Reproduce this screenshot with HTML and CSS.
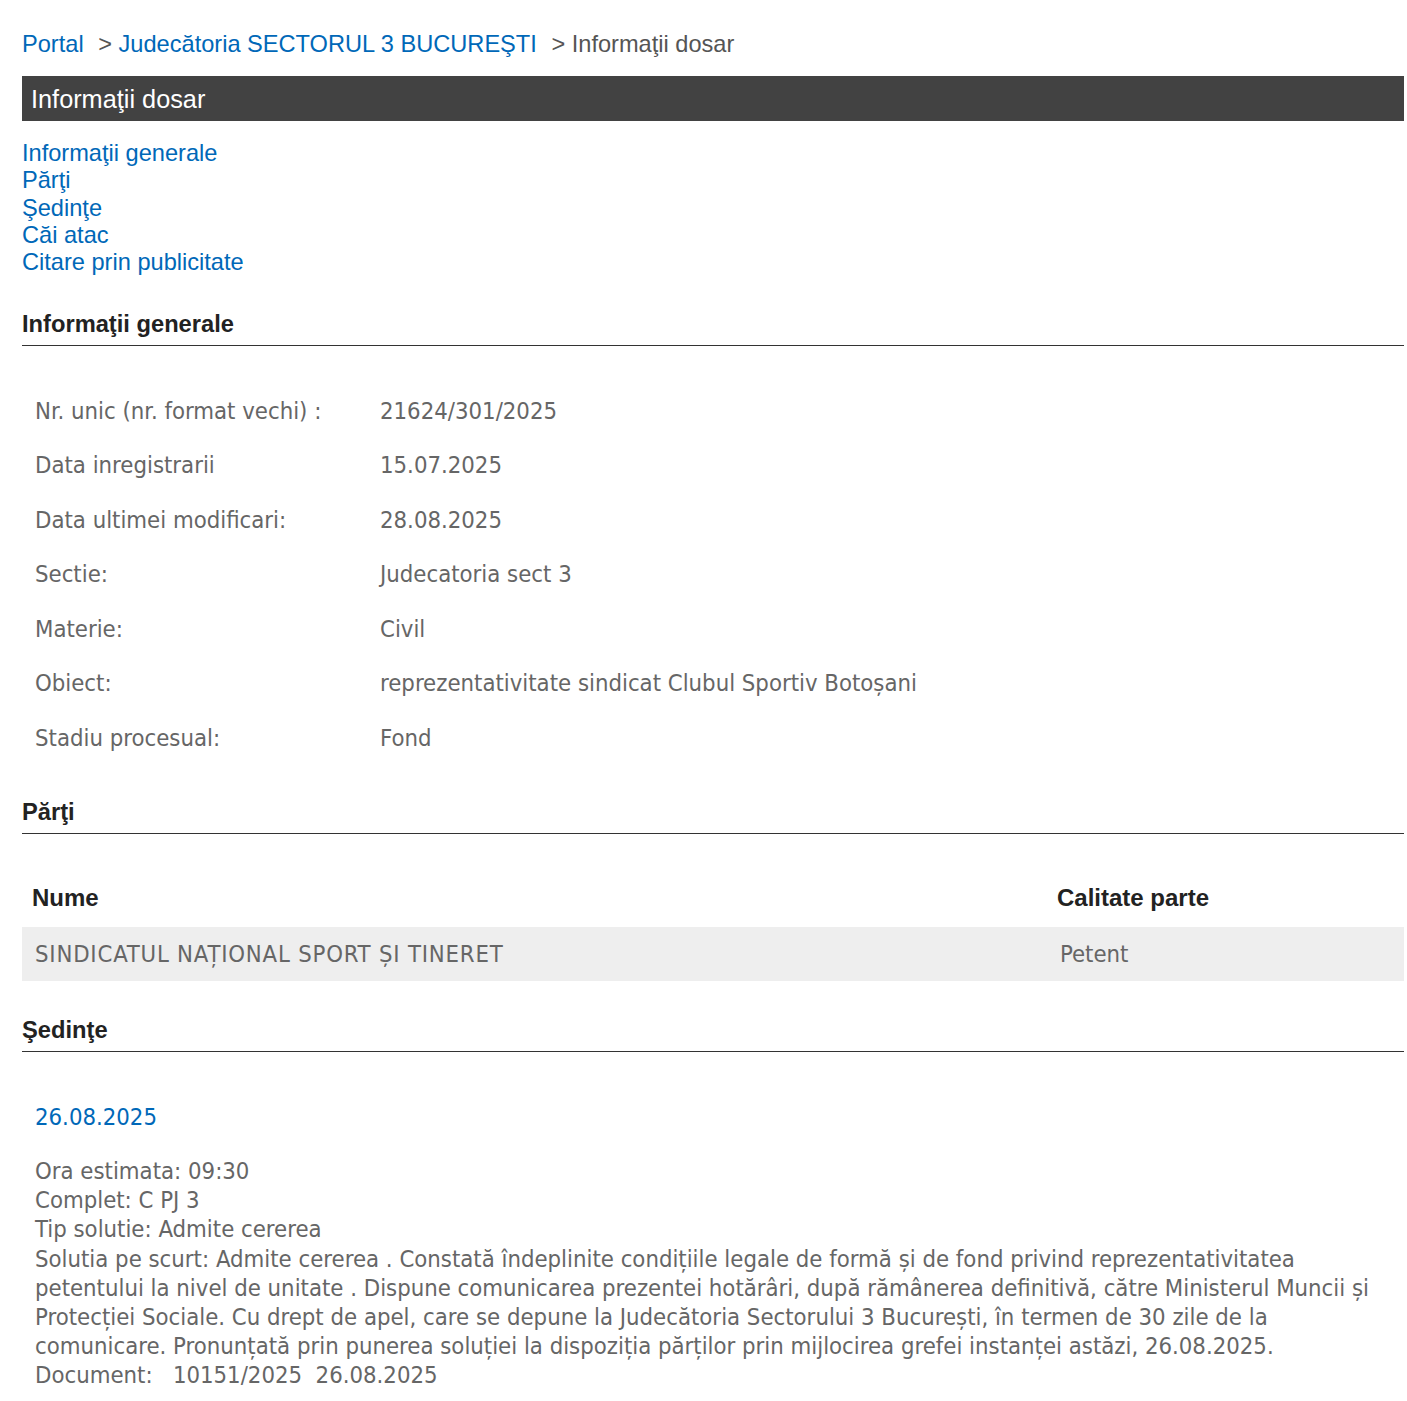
FILE: index.html
```html
<!DOCTYPE html>
<html lang="ro">
<head>
  <meta charset="utf-8" />
  <title>Informaţii dosar</title>
  <meta name="viewport" content="width=device-width, initial-scale=1" />
  <link rel="stylesheet" href="styles.css">
</head>
<body>
  <div class="wrapper">
    <div class="breadcrumb">
      <a href="#">Portal</a>
      <span class="sep">&gt;</span>
      <a href="#">Judecătoria SECTORUL 3 BUCUREŞTI</a>
      <span class="sep">&gt;</span>
      <span class="current">Informaţii dosar</span>
    </div>

    <h1 class="title-bar">Informaţii dosar</h1>

    <ul class="toc">
      <li><a href="#info">Informaţii generale</a></li>
      <li><a href="#parti">Părţi</a></li>
      <li><a href="#sedinte">Şedinţe</a></li>
      <li><a href="#cai">Căi atac</a></li>
      <li><a href="#citare">Citare prin publicitate</a></li>
    </ul>

    <h2 class="section-title" id="info">Informaţii generale</h2>
    <table class="info-table">
      <tr><td class="label">Nr. unic (nr. format vechi) :</td><td>21624/301/2025</td></tr>
      <tr><td class="label">Data inregistrarii</td><td>15.07.2025</td></tr>
      <tr><td class="label">Data ultimei modificari:</td><td>28.08.2025</td></tr>
      <tr><td class="label">Sectie:</td><td>Judecatoria sect 3</td></tr>
      <tr><td class="label">Materie:</td><td>Civil</td></tr>
      <tr><td class="label">Obiect:</td><td>reprezentativitate sindicat Clubul Sportiv Botoșani</td></tr>
      <tr><td class="label">Stadiu procesual:</td><td>Fond</td></tr>
    </table>

    <h2 class="section-title" id="parti">Părţi</h2>
    <table class="parti-table">
      <thead>
        <tr><th class="col-name">Nume</th><th>Calitate parte</th></tr>
      </thead>
      <tbody>
        <tr class="row-alt"><td class="col-name party-name">SINDICATUL NAȚIONAL SPORT ȘI TINERET</td><td>Petent</td></tr>
      </tbody>
    </table>

    <h2 class="section-title" id="sedinte">Şedinţe</h2>
    <div class="sedinta">
      <div class="sedinta-date">26.08.2025</div>
      <div class="sedinta-body">
        Ora estimata: 09:30<br>
        Complet: C PJ 3<br>
        Tip solutie: Admite cererea<br>
        Solutia pe scurt: Admite cererea . Constată îndeplinite condițiile legale de formă și de fond privind reprezentativitatea petentului la nivel de unitate . Dispune comunicarea prezentei hotărâri, după rămânerea definitivă, către Ministerul Muncii și Protecției Sociale. Cu drept de apel, care se depune la Judecătoria Sectorului 3 București, în termen de 30 zile de la comunicare. Pronunțată prin punerea soluției la dispoziția părților prin mijlocirea grefei instanței astăzi, 26.08.2025.<br>
        Document: &nbsp; 10151/2025 &nbsp;26.08.2025
      </div>
    </div>
  </div>
</body>
</html>
```

FILE: styles.css
```css
* {
  box-sizing: border-box;
  margin: 0;
  padding: 0;
}

body {
  background-color: #fff;
  font-family: "Liberation Sans", Arial, sans-serif;
  color: #222;
}

a {
  color: #0068b8;
  text-decoration: none;
}

.wrapper {
  padding: 27px 3px 0 22px;
}

.breadcrumb {
  font-size: 23.6px;
  line-height: 34px;
  color: #555;
}

.breadcrumb .sep {
  margin-left: 8px;
}

.title-bar {
  margin-top: 15px;
  height: 45px;
  padding-left: 9px;
  background-color: #424242;
  color: #fff;
  font-size: 25.3px;
  font-weight: normal;
  line-height: 47px;
}

.toc {
  list-style: none;
  margin-top: 19px;
  font-size: 23.6px;
  line-height: 27.3px;
}

.section-title {
  font-size: 23.7px;
  font-weight: bold;
  color: #222;
  border-bottom: 1px solid #333;
  padding-bottom: 7px;
  line-height: 27px;
}

#info {
  margin-top: 35px;
}

.info-table,
.parti-table {
  width: 100%;
  border-collapse: collapse;
  font-family: "DejaVu Sans Condensed", "DejaVu Sans", sans-serif;
  font-stretch: condensed;
  font-size: 23.7px;
  color: #666;
}

.info-table {
  margin-top: 37px;
  margin-bottom: 34px;
}

.info-table td {
  height: 54.5px;
  padding: 0 13px;
  vertical-align: middle;
}

.info-table td.label {
  width: 345px;
}

.parti-table {
  margin-top: 36px;
  margin-bottom: 36px;
}

.parti-table th {
  text-align: left;
  font-family: "Liberation Sans", Arial, sans-serif;
  font-size: 24px;
  color: #222;
  height: 57px;
  padding: 0 10px;
}

.parti-table td {
  height: 54px;
  padding: 0 13px;
}

.parti-table .col-name {
  width: 1025px;
}

.party-name {
  letter-spacing: 0.8px;
}

.row-alt {
  background-color: #eee;
}

.sedinta {
  padding: 0 13px;
  font-family: "DejaVu Sans Condensed", "DejaVu Sans", sans-serif;
  font-stretch: condensed;
  font-size: 23.7px;
  color: #666;
}

.sedinta-date {
  margin-top: 50px;
  color: #0068b8;
  line-height: 30px;
}

.sedinta-body {
  margin-top: 25px;
  line-height: 29.2px;
}
```
